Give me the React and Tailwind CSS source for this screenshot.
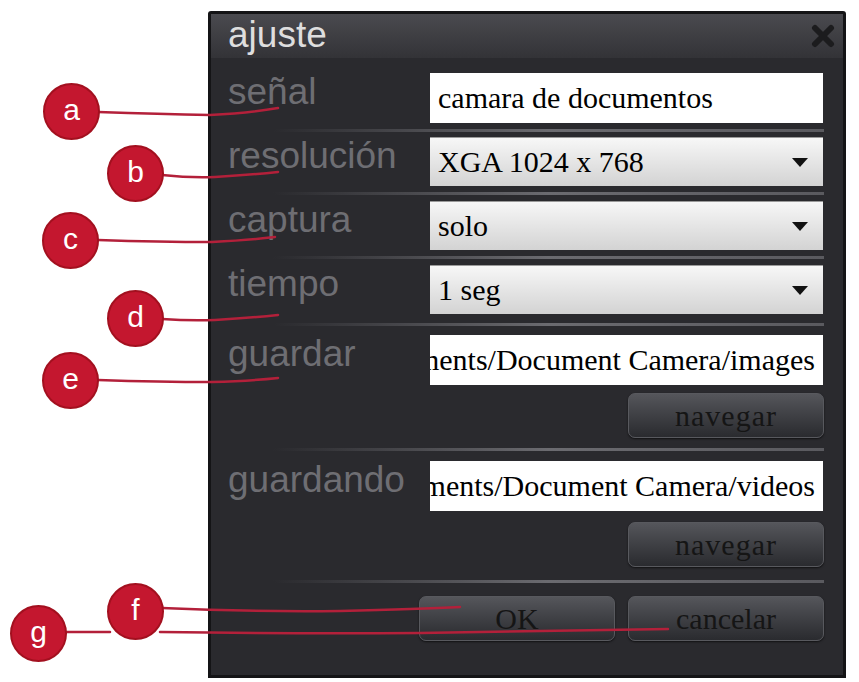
import React from "react";

const SANS = { fontFamily: '"Liberation Sans", Arial, sans-serif' };
const SERIF = { fontFamily: '"Liberation Serif", "Times New Roman", serif' };

const Separator = ({ className = "" }) => (
  <div className={`flex items-center ${className}`}>
    <div className="ml-[45px] h-[3px] flex-1 bg-linear-to-r from-[#2a2a2e] via-[#6b6b70] to-[#5a5a5f]" />
  </div>
);

const Label = ({ children }) => (
  <div className="w-[202px] shrink-0 text-[37px] leading-none text-[#6e6e73] whitespace-nowrap" style={SANS}>
    {children}
  </div>
);

const TextInput = ({ value, alignEnd }) => (
  <div
    className={`w-[393px] h-[50px] bg-white flex items-center overflow-hidden whitespace-nowrap text-[30px] leading-none text-black ${
      alignEnd ? "justify-end pr-[8px]" : "pl-[8px]"
    }`}
    style={SERIF}
  >
    <span className="shrink-0">{value}</span>
  </div>
);

const Select = ({ value }) => (
  <div
    className="w-[393px] h-[49px] bg-linear-to-b from-[#f7f7f7] to-[#d3d3d3] border-t border-[#9a9a9a] flex items-center justify-between pl-[8px] pr-[15px] text-[30px] leading-none text-black"
    style={SERIF}
  >
    <span>{value}</span>
    <span className="w-0 h-0 border-l-[8px] border-r-[8px] border-t-[9px] border-l-transparent border-r-transparent border-t-[#111]" />
  </div>
);

const Btn = ({ children, tracking }) => (
  <div
    className={`w-[196px] h-[45px] rounded-[7px] border border-[#58595e] bg-linear-to-b from-[#55565b] to-[#2a2b2f] shadow-[0_1px_2px_rgba(0,0,0,0.6)] flex items-center justify-center text-[30px] leading-none text-[#151515] ${
      tracking ? "tracking-[1px]" : ""
    }`}
    style={SERIF}
  >
    {children}
  </div>
);

const Row = ({ label, children }) => (
  <div className="flex items-start">
    <Label>{label}</Label>
    {children}
  </div>
);

const Bubble = ({ letter, x, y }) => (
  <div
    className="absolute w-[57px] h-[57px] rounded-full bg-[#c4172f] border-2 border-[#a3101f] flex items-center justify-center text-white text-[30px] leading-none"
    style={{ ...SANS, left: x - 28, top: y - 28 }}
  >
    <span className="-mt-[3px]">{letter}</span>
  </div>
);

export default function App() {
  return (
    <div className="relative w-[859px] h-[682px] bg-white overflow-hidden">
      <div className="ml-[208px] pt-[11px]">
        <div className="w-[638px] h-[667px] border-[3px] border-[#141416] rounded-t-[3px] bg-[#2a2a2e] flex flex-col">
          {/* title bar */}
          <div className="h-[44px] shrink-0 flex items-center justify-between pl-[17px] pr-[8px] bg-linear-to-b from-[#4a4a4f] to-[#333337]">
            <span className="text-[37px] leading-none text-[#dedede] -mt-[3px]" style={SANS}>
              ajuste
            </span>
            <svg width="24" height="24" viewBox="0 0 24 24">
              <path d="M4 4 L20 20 M20 4 L4 20" stroke="#1c1c1e" strokeWidth="6" strokeLinecap="round" />
            </svg>
          </div>

          <div className="flex flex-col pl-[17px] pr-[19px] pt-[15px]">
            <Row label="señal">
              <TextInput value="camara de documentos" />
            </Row>
            <Separator className="h-[14px]" />
            <Row label="resolución">
              <Select value="XGA 1024 x 768" />
            </Row>
            <Separator className="h-[15px]" />
            <Row label="captura">
              <Select value="solo" />
            </Row>
            <Separator className="h-[15px]" />
            <Row label="tiempo">
              <Select value="1 seg" />
            </Row>
            <Separator className="h-[21px]" />
            <Row label="guardar">
              <TextInput value="Documents/Document Camera/images" alignEnd />
            </Row>
            <div className="flex justify-end mt-[8px]">
              <Btn tracking>navegar</Btn>
            </div>
            <Separator className="h-[23px]" />
            <Row label="guardando">
              <TextInput value="Documents/Document Camera/videos" alignEnd />
            </Row>
            <div className="flex justify-end mt-[11px]">
              <Btn tracking>navegar</Btn>
            </div>
            <Separator className="h-[29px]" />
            <div className="flex justify-end gap-[13px]">
              <Btn>OK</Btn>
              <Btn>cancelar</Btn>
            </div>
          </div>
        </div>
      </div>

      {/* callout lines */}
      <svg className="absolute inset-0 pointer-events-none" width="859" height="682" viewBox="0 0 859 682">
        <g fill="none" stroke="#b3203a" strokeWidth="2.5" strokeLinecap="round">
          <path d="M98 112 Q160 114 210 115 Q250 113 278 108" />
          <path d="M162 175 Q190 178 215 177 Q250 175 278 172" />
          <path d="M98 240 Q160 242 212 242 Q250 240 275 237" />
          <path d="M162 319 Q190 321 215 320 Q250 318 278 315" />
          <path d="M98 380 Q160 382 212 382 Q250 381 278 378" />
          <path d="M162 608 Q250 612 340 611 Q420 609 460 607" />
          <path d="M66 632 L110 632" />
          <path d="M160 632 Q300 634 420 633 Q560 631 668 629" />
        </g>
      </svg>

      <Bubble letter="a" x={71} y={111} />
      <Bubble letter="b" x={135} y={173} />
      <Bubble letter="c" x={70} y={240} />
      <Bubble letter="d" x={135} y={318} />
      <Bubble letter="e" x={70} y={380} />
      <Bubble letter="f" x={135} y={611} />
      <Bubble letter="g" x={38} y={633} />
    </div>
  );
}
